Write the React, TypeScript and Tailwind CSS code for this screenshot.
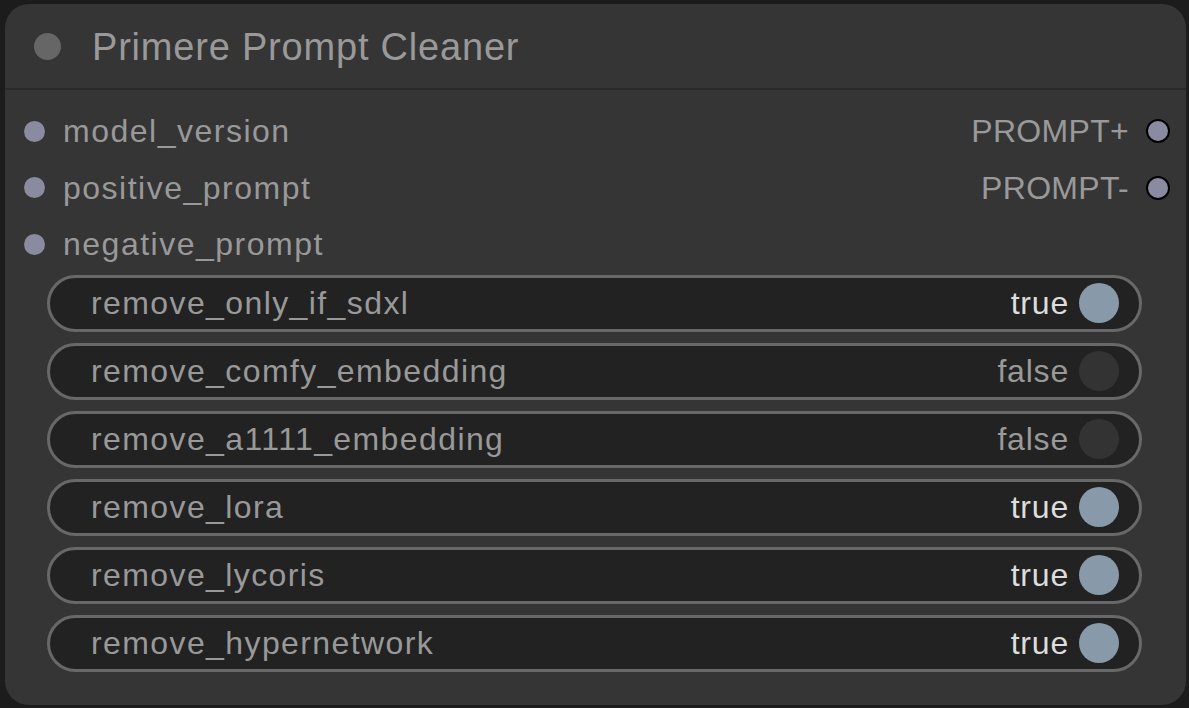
import React from 'react'

const inputs = ['model_version', 'positive_prompt', 'negative_prompt']
const outputs = ['PROMPT+', 'PROMPT-']

const toggles: { name: string; value: boolean }[] = [
  { name: 'remove_only_if_sdxl', value: true },
  { name: 'remove_comfy_embedding', value: false },
  { name: 'remove_a1111_embedding', value: false },
  { name: 'remove_lora', value: true },
  { name: 'remove_lycoris', value: true },
  { name: 'remove_hypernetwork', value: true },
]

function ToggleRow({ name, value }: { name: string; value: boolean }) {
  return (
    <div className="flex h-[57px] items-center rounded-full border-[3px] border-[#686868] bg-[#222222] pl-[41px] pr-[20px]">
      <span className="flex-1 text-[32px] tracking-[1.4px] text-[#999999]">{name}</span>
      <span className={`mr-[10px] text-[32px] tracking-[0.8px] ${value ? 'text-[#dddddd]' : 'text-[#999999]'}`}>
        {value ? 'true' : 'false'}
      </span>
      <span className={`h-[40px] w-[40px] rounded-full ${value ? 'bg-[#8899aa]' : 'bg-[#333333]'}`} />
    </div>
  )
}

export default function App() {
  return (
    <div
      className="h-[708px] w-[1189px] bg-[#1c1c1c] pl-[5px] pt-[4px]"
      style={{ fontFamily: '"Liberation Sans", Arial, sans-serif' }}
    >
      <div className="flex h-[701px] w-[1181px] flex-col rounded-[24px] bg-[#353535]">
        {/* Title bar */}
        <div className="flex h-[86px] items-center border-b-[2px] border-[#2a2a2a] pl-[29px]">
          <span className="h-[27px] w-[27px] rounded-full bg-[#666666]" />
          <span className="ml-[31px] pt-[2px] text-[38px] tracking-[0.8px] text-[#999999]">Primere Prompt Cleaner</span>
        </div>

        {/* Slots */}
        <div className="flex pt-[13px]">
          <div className="flex flex-1 flex-col">
            {inputs.map((name) => (
              <div key={name} className="flex h-[56.5px] items-center pl-[19px]">
                <span className="h-[21px] w-[21px] rounded-full bg-[#8a8aa0]" />
                <span className="ml-[18px] text-[32px] tracking-[1.5px] text-[#999999]">{name}</span>
              </div>
            ))}
          </div>
          <div className="flex flex-col">
            {outputs.map((name) => (
              <div key={name} className="flex h-[56.5px] items-center justify-end pr-[16px]">
                <span className="text-[32px] tracking-[0.3px] text-[#999999]">{name}</span>
                <span className="ml-[17px] h-[24px] w-[24px] rounded-full border-[2.5px] border-black bg-[#8a8aa0]" />
              </div>
            ))}
          </div>
        </div>

        {/* Widgets */}
        <div className="mt-[2px] flex flex-col gap-[11px] pl-[42px] pr-[44px]">
          {toggles.map((t) => (
            <ToggleRow key={t.name} name={t.name} value={t.value} />
          ))}
        </div>
      </div>
    </div>
  )
}
